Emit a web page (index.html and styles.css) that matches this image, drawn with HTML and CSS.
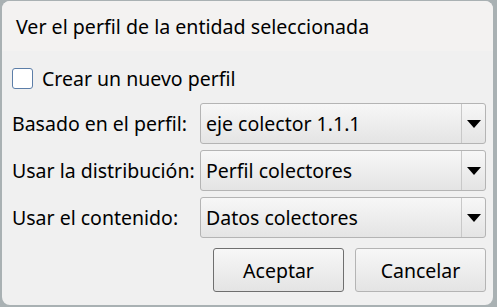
FILE: index.html
```html
<!DOCTYPE html>
<html lang="es">
<head>
<meta charset="utf-8">
<link rel="stylesheet" href="styles.css">
</head>
<body>
<div class="dialog">
  <div class="titlebar">Ver el perfil de la entidad seleccionada</div>
  <div class="content">
    <label class="check-row"><span class="checkbox"></span><span>Crear un nuevo perfil</span></label>
    <div class="form">
      <div class="label">Basado en el perfil:</div>
      <div class="combo"><span class="value">eje colector 1.1.1</span><span class="drop"><svg width="14" height="8" viewBox="0 0 14 8"><path d="M0 0H14L7 8Z" fill="#000"/></svg></span></div>
      <div class="label">Usar la distribución:</div>
      <div class="combo"><span class="value">Perfil colectores</span><span class="drop"><svg width="14" height="8" viewBox="0 0 14 8"><path d="M0 0H14L7 8Z" fill="#000"/></svg></span></div>
      <div class="label">Usar el contenido:</div>
      <div class="combo"><span class="value">Datos colectores</span><span class="drop"><svg width="14" height="8" viewBox="0 0 14 8"><path d="M0 0H14L7 8Z" fill="#000"/></svg></span></div>
    </div>
    <div class="buttons">
      <button class="btn default">Aceptar</button>
      <button class="btn">Cancelar</button>
    </div>
  </div>
</div>
</body>
</html>
```

FILE: styles.css
```css
html, body { margin: 0; padding: 0; }
body {
  width: 497px;
  height: 307px;
  background: #a9b1b3;
  font-family: "Noto Sans", "DejaVu Sans", sans-serif;
  color: #000;
  overflow: hidden;
}
.dialog {
  box-sizing: border-box;
  margin: 1px 0 0 2px;
  width: 491px;
  height: 304px;
  background: #f0f0f0;
  border-radius: 8px;
  overflow: hidden;
  display: flex;
  flex-direction: column;
}
.titlebar {
  height: 50px;
  background: #f3f2f1;
  padding-left: 14px;
  font-size: 19.6px;
  line-height: 52px;
  flex: none;
}
.content {
  padding: 17px 7px 0 10px;
  display: flex;
  flex-direction: column;
}
.check-row {
  display: flex;
  align-items: center;
  gap: 9px;
  font-size: 19.5px;
  height: 21px;
}
.checkbox {
  box-sizing: border-box;
  width: 21px;
  height: 21px;
  border: 1px solid #5c7ea8;
  border-radius: 3px;
  background: #fff;
}
.form {
  margin-top: 14px;
  display: grid;
  grid-template-columns: 188px 1fr;
  row-gap: 6px;
  font-size: 19.5px;
}
.label {
  display: flex;
  align-items: center;
}
.combo {
  box-sizing: border-box;
  height: 41px;
  border: 1px solid #b4b4b4;
  border-radius: 3px;
  background: linear-gradient(#f7f7f7, #e4e4e4);
  display: flex;
  align-items: stretch;
}
.combo .value {
  flex: 1;
  display: flex;
  align-items: center;
  padding-left: 5px;
}
.combo .drop {
  width: 23px;
  border-left: 1px solid #c8c8c8;
  display: flex;
  align-items: center;
  justify-content: center;
}
.buttons {
  margin-top: 10px;
  display: flex;
  justify-content: flex-end;
  gap: 11px;
}
.btn {
  box-sizing: border-box;
  width: 131px;
  height: 44px;
  font-family: inherit;
  font-size: 19.5px;
  color: #000;
  border: 1px solid #b4b4b4;
  border-radius: 3px;
  background: linear-gradient(#f7f7f7, #e4e4e4);
  padding: 0;
}
.btn.default {
  border-color: #6f6f6f;
}
```
